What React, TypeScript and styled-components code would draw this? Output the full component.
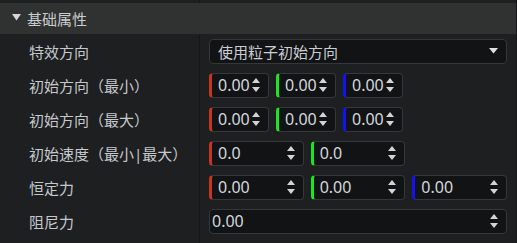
import styled, { createGlobalStyle } from "styled-components";

const GlobalStyle = createGlobalStyle`
  html, body {
    margin: 0;
    padding: 0;
    background: #1e1f21;
  }
  body {
    font-family: "Noto Sans", "Noto Sans CJK SC", sans-serif;
  }
`;

const RED = "#c8341f";
const GREEN = "#1ee61e";
const BLUE = "#1212f2";

function SpinIcon() {
  return (
    <svg width="8" height="15" viewBox="0 0 8 15">
      <polygon points="4,0 8,5 0,5" fill="#d4d4d4" />
      <polygon points="0,9 8,9 4,14" fill="#d4d4d4" />
    </svg>
  );
}

function NumberField({ value, accent }: { value: string; accent?: string }) {
  return (
    <NumberBox $accent={accent}>
      <NumberInput defaultValue={value} $accent={accent} />
      <SpinIcon />
    </NumberBox>
  );
}

export default function App() {
  return (
    <>
      <GlobalStyle />
      <Panel>
        <TopGap />
        <Header>
          <svg width="9" height="7" viewBox="0 0 9 7">
            <polygon points="0,0 9,0 4.5,6.5" fill="#d6d6d6" />
          </svg>
          <span>基础属性</span>
        </Header>
        <Body>
          <Row>
            <Label>特效方向</Label>
            <Control>
              <Select>
                <span>使用粒子初始方向</span>
                <svg width="9" height="6" viewBox="0 0 9 6">
                  <polygon points="0,0 9,0 4.5,5.5" fill="#e0e0e0" />
                </svg>
              </Select>
            </Control>
          </Row>
          <Row>
            <Label>初始方向（最小）</Label>
            <Control>
              <CompactGroup>
                <NumberField value="0.00" accent={RED} />
                <NumberField value="0.00" accent={GREEN} />
                <NumberField value="0.00" accent={BLUE} />
              </CompactGroup>
            </Control>
          </Row>
          <Row>
            <Label>初始方向（最大）</Label>
            <Control>
              <CompactGroup>
                <NumberField value="0.00" accent={RED} />
                <NumberField value="0.00" accent={GREEN} />
                <NumberField value="0.00" accent={BLUE} />
              </CompactGroup>
            </Control>
          </Row>
          <Row>
            <Label>初始速度（最小|最大）</Label>
            <Control>
              <WideGroup>
                <NumberField value="0.0" accent={RED} />
                <NumberField value="0.0" accent={GREEN} />
              </WideGroup>
            </Control>
          </Row>
          <Row>
            <Label>恒定力</Label>
            <Control>
              <WideGroup>
                <NumberField value="0.00" accent={RED} />
                <NumberField value="0.00" accent={GREEN} />
                <NumberField value="0.00" accent={BLUE} />
              </WideGroup>
            </Control>
          </Row>
          <Row>
            <Label>阻尼力</Label>
            <Control>
              <NumberField value="0.00" />
            </Control>
          </Row>
        </Body>
      </Panel>
    </>
  );
}

const divider = `linear-gradient(to right, transparent 199px, #151618 199px, #151618 200px, transparent 200px)`;

const Panel = styled.div`
  width: 517px;
  height: 243px;
  box-sizing: border-box;
  border-right: 1px solid #161719;
  display: flex;
  flex-direction: column;
  overflow: hidden;
  background: #1e1f21;
`;

const TopGap = styled.div`
  height: 3px;
  background: ${divider};
`;

const Header = styled.div`
  height: 31px;
  flex-shrink: 0;
  display: flex;
  align-items: center;
  gap: 6px;
  padding-left: 12px;
  background: #303131;
  color: #c9cccf;
  font-size: 15px;

  svg {
    margin-top: -2px;
  }
`;

const Body = styled.div`
  flex: 1;
  background: ${divider};
`;

const Row = styled.div`
  display: grid;
  grid-template-columns: 200px 1fr;
  height: 34px;
`;

const Label = styled.div`
  display: flex;
  align-items: center;
  padding-left: 29px;
  color: #c5c9cd;
  font-size: 15px;
  white-space: nowrap;
`;

const Control = styled.div`
  display: flex;
  align-items: center;
  padding: 0 9px;
  min-width: 0;

  > * {
    flex: 1;
  }
`;

const Select = styled.div`
  height: 25px;
  box-sizing: border-box;
  display: flex;
  align-items: center;
  justify-content: space-between;
  padding: 0 8px 0 8px;
  background: #121315;
  border: 1px solid #36373a;
  border-radius: 4px;
  color: #c9ced3;
  font-size: 15px;
`;

const CompactGroup = styled.div`
  display: grid;
  grid-template-columns: repeat(3, 60px);
  gap: 7px;
`;

const WideGroup = styled.div`
  display: grid;
  grid-template-columns: repeat(3, 1fr);
  gap: 7px;
`;

const NumberBox = styled.div<{ $accent?: string }>`
  height: 25px;
  box-sizing: border-box;
  display: flex;
  align-items: center;
  padding-right: 8px;
  background: #121315;
  border: 1px solid #36373a;
  border-left: ${(p) => (p.$accent ? `3px solid ${p.$accent}` : "1px solid #36373a")};
  border-radius: 4px;
  min-width: 0;

  svg {
    flex-shrink: 0;
  }
`;

const NumberInput = styled.input<{ $accent?: string }>`
  flex: 1;
  min-width: 0;
  height: 100%;
  box-sizing: border-box;
  padding: 0 0 0 ${(p) => (p.$accent ? "6px" : "2px")};
  border: none;
  outline: none;
  background: transparent;
  color: #d2d8de;
  font-family: "Noto Sans", sans-serif;
  font-size: 16px;
`;
